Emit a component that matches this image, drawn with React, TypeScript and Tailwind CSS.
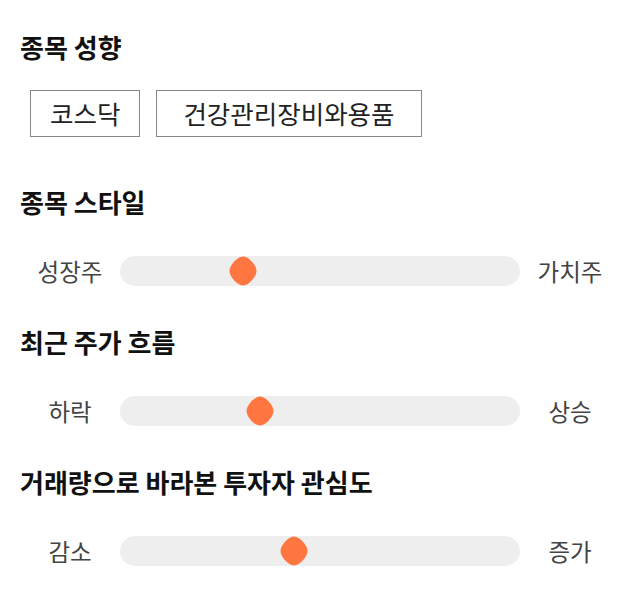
import React from "react";

const font = { fontFamily: '"Noto Sans CJK KR", "Noto Sans", sans-serif' };

function Thumb({ pct }: { pct: number }) {
  return (
    <svg
      className="absolute top-1/2 -translate-x-1/2 -translate-y-1/2"
      style={{ left: `${pct}%` }}
      width="28"
      height="30"
      viewBox="0 0 28 30"
    >
      <path
        d="M14 0.5 C20 0.5 27.5 9.5 27.5 15 C27.5 20.5 20 29.5 14 29.5 C8 29.5 0.5 20.5 0.5 15 C0.5 9.5 8 0.5 14 0.5 Z"
        fill="#ff7640"
      />
    </svg>
  );
}

function SliderRow({ left, right, pct }: { left: string; right: string; pct: number }) {
  return (
    <div className="mt-[39px] flex h-[30px] items-center">
      <div className="w-[100px] text-center text-[23.5px] leading-[30px] text-[#444]">{left}</div>
      <div className="relative h-[30px] flex-1 rounded-full bg-[#eeeeee]">
        <Thumb pct={pct} />
      </div>
      <div className="w-[100px] text-center text-[23.5px] leading-[30px] text-[#444]">{right}</div>
    </div>
  );
}

function Heading({ children, className = "" }: { children: React.ReactNode; className?: string }) {
  return (
    <div className={`h-[30px] text-[26px] font-bold leading-[30px] text-[#111] ${className}`}>
      {children}
    </div>
  );
}

export default function App() {
  return (
    <div className="h-[606px] w-[640px] bg-white px-5 pt-[32px]" style={font}>
      <Heading>종목 성향</Heading>
      <div className="ml-[10px] mt-[28px] flex gap-4">
        <div className="flex h-[47px] items-center border border-[#888] px-[19px] text-[25.5px] text-[#222]">
          코스닥
        </div>
        <div className="flex h-[47px] items-center border border-[#888] px-[26px] text-[25.5px] text-[#222]">
          건강관리장비와용품
        </div>
      </div>

      <Heading className="mt-[50px]">종목 스타일</Heading>
      <SliderRow left="성장주" right="가치주" pct={30.75} />

      <Heading className="mt-[41px]">최근 주가 흐름</Heading>
      <SliderRow left="하락" right="상승" pct={35} />

      <Heading className="mt-[41px]">거래량으로 바라본 투자자 관심도</Heading>
      <SliderRow left="감소" right="증가" pct={43.5} />
    </div>
  );
}
